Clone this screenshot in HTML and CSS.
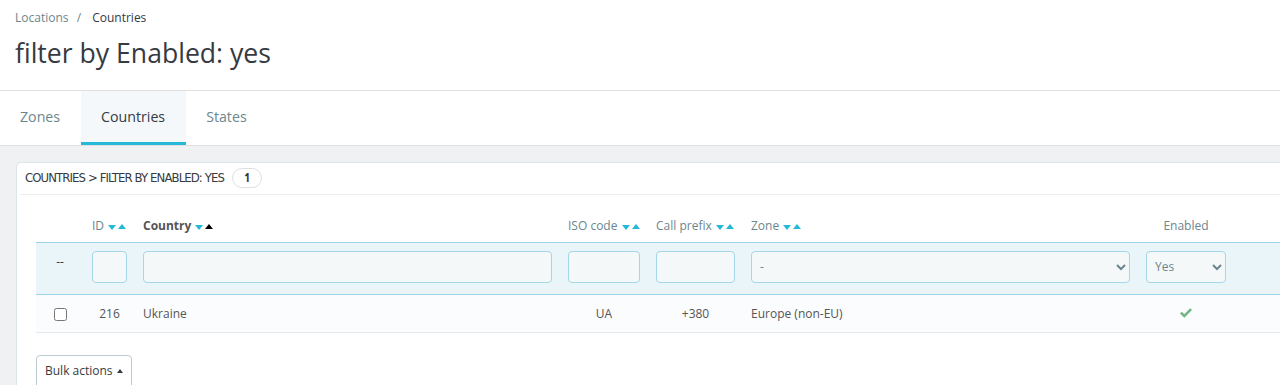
FILE: index.html
```html
<!DOCTYPE html>
<html>
<head>
    <link rel="stylesheet" href="styles.css">
</head>
<body>
<div class="page-head">
    <div class="breadcrumb">
        <span class="crumb">Locations</span>
        <span class="sep">/</span>
        <span class="crumb-active">Countries</span>
    </div>
    <h1 class="page-title">filter by Enabled: yes</h1>
</div>
<div class="tabs">
    <a class="tab">Zones</a>
    <a class="tab active">Countries</a>
    <a class="tab">States</a>
</div>
<div class="content">
    <div class="panel">
        <div class="panel-heading">
            COUNTRIES &gt; FILTER BY ENABLED: YES
            <span class="badge">1</span>
        </div>
        <div class="table-wrap">
            <table class="grid">
                <thead>
                    <tr class="head">
                        <th class="c-check"></th>
                        <th class="c-id">ID <span class="down"></span><span class="up"></span></th>
                        <th class="c-country strong">Country <span class="down"></span><span class="up on"></span></th>
                        <th class="c-iso">ISO code <span class="down"></span><span class="up"></span></th>
                        <th class="c-prefix">Call prefix <span class="down"></span><span class="up"></span></th>
                        <th class="c-zone">Zone <span class="down"></span><span class="up"></span></th>
                        <th class="c-enabled center">Enabled</th>
                        <th class="c-actions"></th>
                    </tr>
                    <tr class="filter">
                        <td class="center dash">--</td>
                        <td><input class="field" type="text"></td>
                        <td><input class="field" type="text"></td>
                        <td><input class="field" type="text"></td>
                        <td><input class="field" type="text"></td>
                        <td>
                            <select class="field">
                                <option>-</option>
                            </select>
                        </td>
                        <td>
                            <select class="field">
                                <option>Yes</option>
                            </select>
                        </td>
                        <td></td>
                    </tr>
                </thead>
                <tbody>
                    <tr class="row">
                        <td class="center"><input type="checkbox"></td>
                        <td class="center">216</td>
                        <td>Ukraine</td>
                        <td class="center">UA</td>
                        <td class="center">+380</td>
                        <td>Europe (non-EU)</td>
                        <td class="center">
                            <svg class="check" width="14" height="11" viewBox="0 0 14 11">
                                <path d="M1 5.5 L2.8 3.7 L5.3 6.2 L11.2 0.3 L13 2.1 L5.3 9.8 Z" fill="#70b580"/>
                            </svg>
                        </td>
                        <td></td>
                    </tr>
                </tbody>
            </table>
            <button class="bulk">Bulk actions <span class="caret"></span></button>
        </div>
    </div>
</div>
</body>
</html>
```

FILE: styles.css
```css
*{
    font-family: "Open Sans", "Noto Sans", sans-serif;
    box-sizing: border-box;
}
body{
    margin: 0;
    background: #eff1f2;
    color: #363a41;
    overflow: hidden;
}
.page-head{
    background: #fff;
    height: 91px;
    padding: 10px 15px 0;
    border-bottom: 1px solid #dfdfdf;
}
.breadcrumb{
    font-size: 12px;
    line-height: 16px;
}
.crumb{
    color: #6c868e;
}
.sep{
    color: #6c868e;
    margin: 0 8px 0 5px;
}
.crumb-active{
    color: #363a41;
}
.page-title{
    margin: 11px 0 0;
    font-size: 26.6px;
    font-weight: 400;
    line-height: 32px;
    color: #363a41;
}
.tabs{
    display: flex;
    background: #fff;
    height: 55px;
    border-bottom: 1px solid #dfdfdf;
}
.tab{
    display: flex;
    align-items: center;
    padding: 0 21px 0 20px;
    font-size: 14.2px;
    color: #6c868e;
    border-bottom: 3px solid transparent;
}
.tab.active{
    background: #f4f8fb;
    color: #363a41;
    border-bottom-color: #25b9d7;
}
.content{
    padding: 16px 0 0 16px;
}
.panel{
    width: 1330px;
    height: 260px;
    background: #fff;
    border: 1px solid #dbe6e9;
    border-radius: 5px 0 0 0;
    padding: 0 0 0 3px;
}
.panel-heading{
    display: flex;
    align-items: center;
    height: 32px;
    padding: 0 0 2px 5px;
    border-bottom: 1px solid #eeeeee;
    font-family: "Ubuntu Condensed", "DejaVu Sans", sans-serif;
    font-stretch: condensed;
    font-size: 13px;
    color: #363a41;
    letter-spacing: -0.9px;
}
.badge{
    display: inline-flex;
    align-items: center;
    justify-content: center;
    width: 30px;
    height: 20px;
    margin-left: 8px;
    border: 1px solid #dfdfdf;
    border-radius: 10px;
    font-family: "Open Sans", sans-serif;
    font-weight: 700;
    font-size: 12px;
    letter-spacing: 0;
    color: #363a41;
}
.table-wrap{
    padding: 15px 0 0 16px;
}
.grid{
    border-collapse: collapse;
    font-size: 12px;
    color: #555;
}
.grid th{
    height: 32px;
    padding: 0 8px;
    text-align: left;
    font-weight: 400;
    color: #6c868e;
    white-space: nowrap;
}
.grid th.strong{
    font-weight: 700;
    color: #555;
}
.grid .center{
    text-align: center;
}
.c-check{ width: 48px; }
.c-id{ width: 51px; }
.c-country{ width: 425px; }
.c-iso{ width: 88px; }
.c-prefix{ width: 95px; }
.c-zone{ width: 395px; }
.c-enabled{ width: 96px; }
.c-actions{ width: 100px; }
.down, .up{
    display: inline-block;
    width: 0;
    height: 0;
    border-left: 4.5px solid transparent;
    border-right: 4.5px solid transparent;
    vertical-align: middle;
}
.down{
    border-top: 5px solid #25b9d7;
    margin-left: 1px;
}
.up{
    border-bottom: 5px solid #25b9d7;
    margin-left: 2px;
    position: relative;
    top: -1px;
}
.up.on{
    border-bottom-color: #000;
}
.filter td{
    background: #eaf5fa;
    border-top: 1px solid #9dd3e8;
    border-bottom: 1px solid #9dd3e8;
    padding: 8px 8px 11px;
}
.dash{
    color: #363a41;
    padding-bottom: 21px !important;
}
.field{
    display: block;
    width: 100%;
    height: 32px;
    border: 1px solid #a6d6e9;
    border-radius: 4px;
    background: #f4f8f9;
    font-size: 12px;
    color: #6c868e;
    padding: 0 8px;
}
select.field{
    padding: 0 4px;
}
.row td{
    background: #fbfcfd;
    border-bottom: 1px solid #e4e8ea;
    padding: 10px 8px;
    line-height: 17px;
}
.row input[type=checkbox]{
    margin: 0;
    width: 13px;
    height: 13px;
    vertical-align: middle;
}
.check{
    display: block;
    margin: 0 auto;
}
.bulk{
    display: flex;
    align-items: center;
    margin-top: 22px;
    height: 34px;
    padding: 0 8px 2px;
    background: #fff;
    border: 1px solid #bbcdd2;
    border-radius: 4px;
    font-size: 12px;
    color: #363a41;
}
.caret{
    width: 0;
    height: 0;
    margin-left: 4px;
    border-left: 3.5px solid transparent;
    border-right: 3.5px solid transparent;
    border-bottom: 4px solid #363a41;
}
```
